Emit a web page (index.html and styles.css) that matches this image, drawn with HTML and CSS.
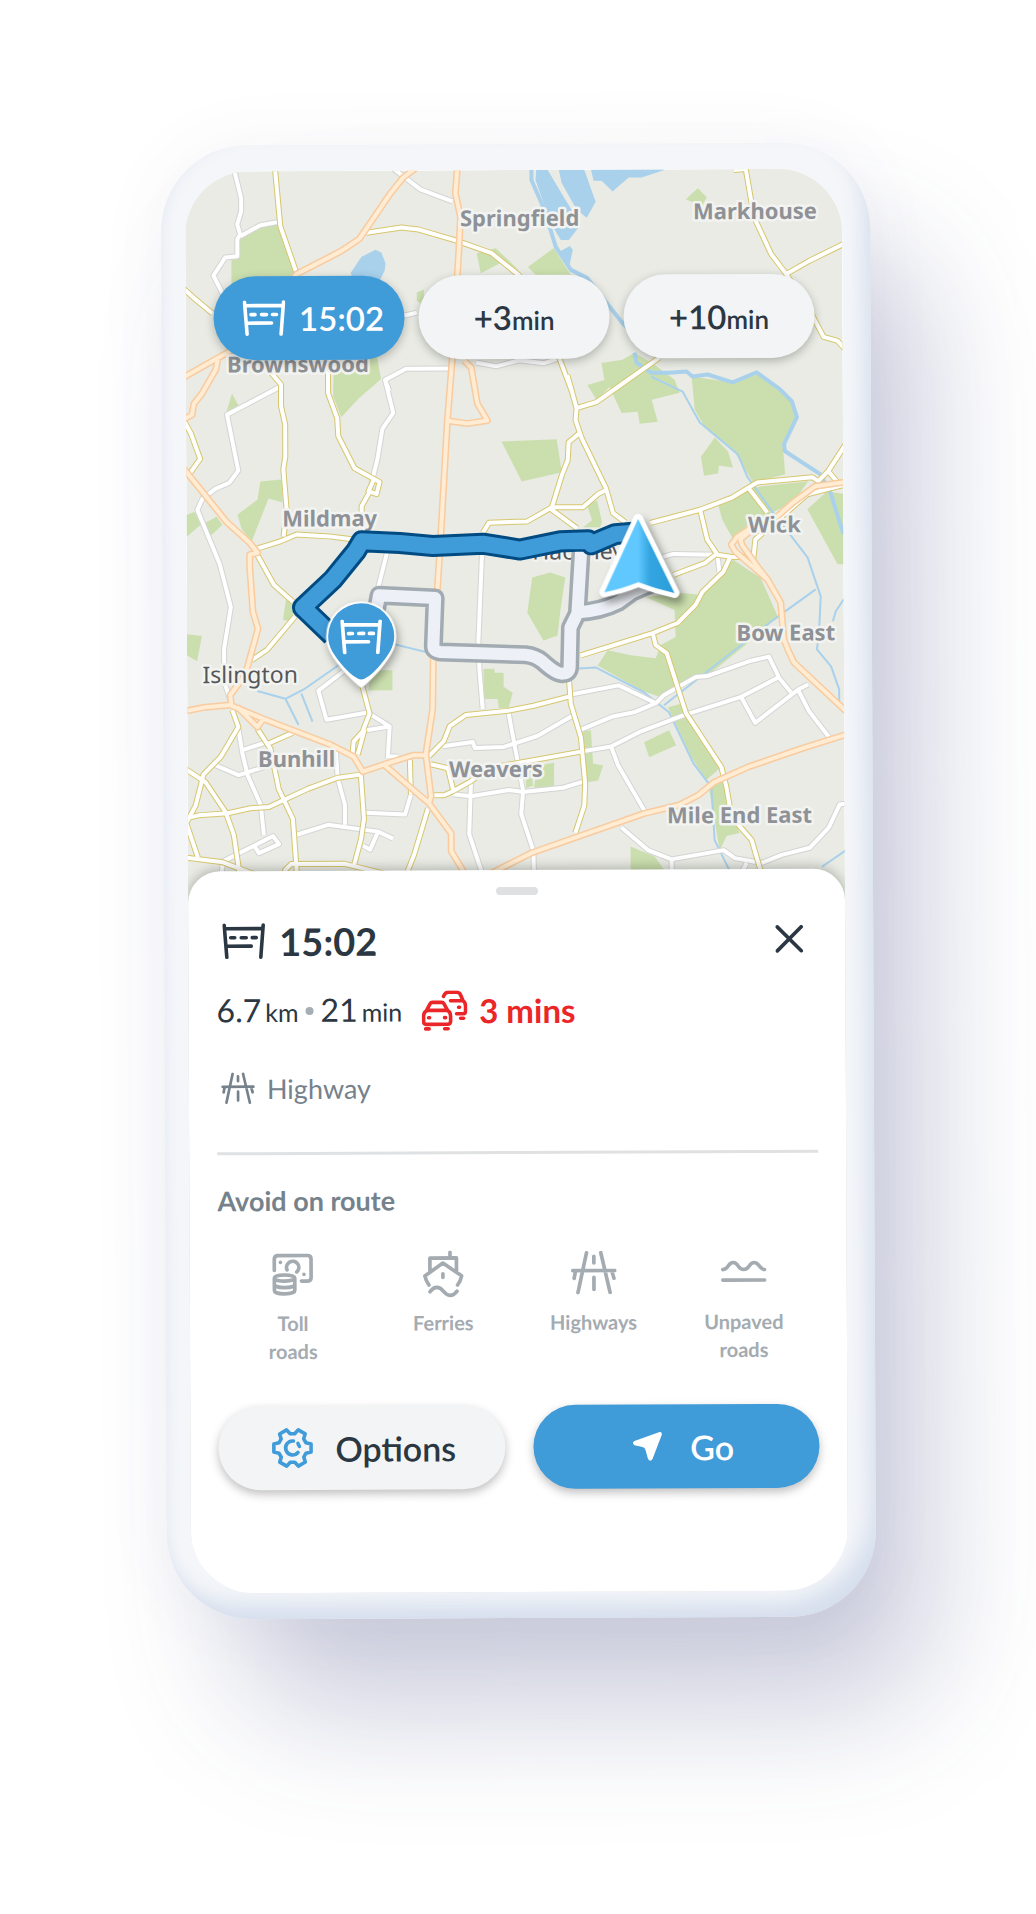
FILE: index.html
```html
<!DOCTYPE html>
<html lang="en">

<head>
    <meta charset="UTF-8">
    <meta name="viewport" content="width=device-width, initial-scale=1.0">
    <title>Route overview</title>
    <link rel="stylesheet" href="styles.css">
</head>

<body>
    <svg class="sprite" aria-hidden="true">
        <symbol id="icon-toll-gate" viewBox="0 0 43 36">
            <path d="M2 2L4.500 34M41 2L38.500 34M2.500 5.500H40.500M4 23H29M8.500 14.500H12.500M19 14.500H24M30 14.500H34" />
        </symbol>
        <symbol id="icon-road" viewBox="0 0 45 43">
            <path d="M15.500 2L7 41M29.500 2L38.500 41M2 19.500H43.500M22.700 5.500V12M22.700 26V38M4.500 21L3.300 27M40.500 21L42.300 27" />
        </symbol>
    </svg>

    <main class="phone">
        <div class="screen">
            <div class="map">
                <svg class="map-canvas" viewBox="187 170 656 730" role="img" aria-label="Map of Hackney and Islington">
                    <defs>
                        <g id="roads-minor">
                            <path d="M236 168L243 197V210L239 223L242 233L239 238V255L227 256L215 274L224 292M242 235L262 224L279 221" />
                            <path d="M395 168L422 189L454 201M405 315L418 312M390 390L386 379L407 368L450 368M477 362L497 366L520 360L545 363L560 358" />
                            <path d="M386 379L394 412L383 428L378 458L372 482M387 552L378 587M482 553L478 640L479 670L482 708" />
                            <path d="M280 386L228 413L239 469L230 481L216 487L203 497L198 508L220 562L231 605L224 647V680L231 700" />
                            <path d="M663 557L673 554L715 555M717 555L719 572" />
                            <path d="M580 751L610 746L640 731L683 715L740 697L777 678M610 746L617 765L643 810" />
                            <path d="M570 694L618 685L655 703L633 712L612 716L580 729M655 703L663 695L695 677L707 676L750 661L768 657L778 678L790 693" />
                            <path d="M740 697L754 723L797 690L807 685M797 690L808 712L828 738M508 713L522 790L520 813L532 850L533 900" />
                            <path d="M442 745L472 741L474 747L503 746L537 735L572 715M452 793L470 795L508 789L522 791L562 787L582 781M470 780L468 833L480 870" />
                            <path d="M850 803L838 805L827 828L808 848L780 855L760 863L733 858L722 850L670 859L647 850L620 827M670 859V900M745 863L730 890" />
                            <path d="M238 727L242 752L247 773L260 803L263 833M220 860L272 834L278 842L258 851L253 843M222 860L218 890M242 748L267 740" />
                            <path d="M215 763L238 773L270 763M335 747L337 777L344 803V823M295 833L327 823L377 830L392 837M377 830L369 848L362 844" />
                            <path d="M365 811L404 813L410 793M343 670L318 689L326 718L367 711L389 725L387 757M389 725L364 729M387 755H397" />
                        </g>
                        <g id="roads-yellow">
                            <path d="M277 168L282 225L298 272M184 286L195 296L214 312M368 232L403 227L420 229L457 240L493 253L520 275L555 330L560 358L572 390" />
                            <path d="M329 363V392L338 417L339 435L355 467L380 481L377 493L369 490L374 479M371 489L362 505V527" />
                            <path d="M265 363L282 383V405L286 423V455L284 468L287 507L284 535M184 417L192 432L201 457L191 471" />
                            <path d="M257 547L280 540L297 533L330 535L352 538M257 552L274 583L293 600M295 615L267 648L252 658" />
                            <path d="M483 532L489 522L527 521L552 507L562 475L568 460L569 442L580 433M552 507H583L598 494L606 490M550 508L577 528" />
                            <path d="M568 375L577 408L576 420L582 438L606 488L613 513L625 522M660 358L597 402L577 408" />
                            <path d="M650 523L700 510L732 498L757 483L812 478L818 482L828 472L845 446M828 472L838 484" />
                            <path d="M700 510L707 540L717 555L730 557L753 558L755 540L807 495L843 486M748 488L767 513" />
                            <path d="M673 575L705 563L715 555M730 557L723 572L702 592L695 605L677 623L652 633L580 655" />
                            <path d="M735 171L747 170L755 218L772 255L787 275L810 262L845 245M787 275L813 317L824 338L838 342L845 350" />
                            <path d="M568 675L570 703L580 737L584 783L583 805L574 832M568 696L533 705L507 710L465 714L449 725L443 740L428 755" />
                            <path d="M500 765L517 762L580 751M652 633L655 645L666 653L677 688L685 713L720 767L725 787L730 817L750 840L760 875" />
                            <path d="M232 708L238 725L220 755L203 772L195 803L186 820M184 766L205 780L225 810L233 833L239 875" />
                            <path d="M184 816L198 813L227 811L250 806L268 805L307 787L337 776L360 773L363 817L360 837L353 863" />
                            <path d="M257 727L270 747L278 787L292 817L296 875M267 742L292 731M184 855L222 860L253 872M186 822L197 855" />
                            <path d="M284 880V868L290 862L343 862L383 872M362 685L369 712L362 730L353 740L352 752M364 728L357 753" />
                            <path d="M427 807L413 853L405 873M409 758L410 793M430 763L447 767L452 788M432 794H443L452 790L470 780L490 765" />
                        </g>
                        <g id="roads-main">
                            <path d="M417 168L405 177L392 193L361 238L343 250L298 273L240 345L227 352L184 376M219 358L217 368L203 392L195 402L193 413L184 418" />
                            <path d="M459 168L457 193L462 217L460 253L453 360L448 420L441 533L433 652L432 708L425 753L430 795L428 802" />
                            <path d="M465 360L472 367L478 403L488 420L468 423L448 420" />
                            <path d="M184 466L227 520L250 541L258 551L250 553V565L253 610L258 627L245 673L230 693L231 703" />
                            <path d="M184 709L205 705L230 703L263 717L330 743L353 755L362 770L383 763L412 754L425 754M237 705L257 725L263 717M383 763L428 802L450 832V850L465 875" />
                            <path d="M845 483L815 487L793 503L777 517L753 527L737 537L731 545L735 552L767 580L780 603L783 640L787 650L793 663L845 712" />
                            <path d="M755 527L740 540L742 546L750 557L757 567L767 580" />
                            <path d="M845 735L800 749L747 767L713 782L697 795L677 805L643 813L530 852L490 872" />
                        </g>
                        <path id="route-alternative" d="M376 610L379 594L435 597L433 645Q433 650 440 651L525 654Q535 655 542 661Q556 674 562 673Q569 673 569 666L570 627L577 613L581 550M577 612Q600 611 618 602L632 592L660 580" />
                        <path id="route-selected" d="M642 532L615 534L591 544L588 540L560 541L520 549L483 543L433 545L400 542L362 540L356 550L333 578L303 606L332 634M578 541V549" />
                        <linearGradient id="arrow-fill" x1="0" y1="0" x2="1" y2="0">
                            <stop offset="0" stop-color="#60c8ff" />
                            <stop offset=".48" stop-color="#60c8ff" />
                            <stop offset=".65" stop-color="#34a5e0" />
                            <stop offset="1" stop-color="#2b9edb" />
                        </linearGradient>
                    </defs>

                    <rect class="land" x="187" y="170" width="656" height="730" />

                    <g class="park">
                        <path d="M242 237L260 227L279 223L297 273L300 290L233 300V258H240ZM335 360L378 356L382 378L360 397L342 416L334 395Z" />
                        <path d="M478 253L497 248L520 270L503 262L482 273ZM555 248L572 275H537L529 267ZM687 200L699 189L708 198L703 207ZM418 292L425 289V305L418 300Z" />
                        <path d="M692 377L733 383L757 375L780 390L793 402L797 418L783 448L785 475L753 483L733 450L705 428L695 410Z" />
                        <path d="M588 385L605 380L602 363L623 360L635 353L655 365L675 380L680 393L652 400L658 422L640 424L638 412L622 413L610 387L597 400Z" />
                        <path d="M502 441L557 439L562 472L522 481ZM715 438L728 452L733 468L719 466L718 474L704 476L701 457Z" />
                        <path d="M718 505L748 490L760 487L808 482L793 503L748 525L733 540L722 520ZM827 492L843 495V565H837L807 510Z" />
                        <path d="M733 560L750 572L760 578L777 617L745 645L705 677L685 683L660 697L640 690L597 665L607 650L630 655L655 658L660 645L675 637L674 610L645 597L682 593L700 595Z" />
                        <path d="M532 577L550 572L565 577L560 610L557 635L543 640L527 612ZM587 505L597 500L602 522L600 527H583L592 520Z" />
                        <path d="M233 392L240 405L227 412ZM238 513L258 498L261 480L282 478L283 501L269 497L252 540L242 527ZM187 513L195 510L202 522L187 535ZM202 523L217 515L223 523L212 533Z" />
                        <path d="M187 632L202 634L197 659L187 653ZM286 598L294 603L292 620L283 618ZM370 669H392V689H368Z" />
                        <path d="M483 668H494V672H503V686L512 692L508 707H498L497 698H483ZM643 742L668 730L675 745L648 757ZM667 707L683 703L720 767L705 780L690 757Z" />
                        <path d="M707 785L725 780L732 820L738 833L725 836L718 850ZM629 846L653 856L663 870V880H629ZM582 730H590L592 763L602 765L597 780L583 782ZM536 765L553 762V787L533 787ZM525 770H530L532 785L525 787Z" />
                    </g>

                    <g class="water">
                        <path d="M352 272L363 256L377 249L383 252L387 263L386 270L380 282H356Z" />
                        <path d="M538 168H548L565 197L582 225L570 240H562L552 223L537 180ZM560 168H585L597 202L588 218L578 210L563 183ZM592 168H665V171L643 178H630L614 192L603 181H595ZM560 252L571 246L574 250L570 268Z" />
                    </g>
                    <g class="river">
                        <path d="M533 170V180L545 208L557 247L572 270L588 278L623 323L640 340M635 353L637 363L652 373H670L687 372L693 377L708 375L733 383L757 373L780 390L792 402L797 418L784 445L785 452L820 475L830 493L843 535" />
                    </g>
                    <g class="river river-thin">
                        <path d="M652 377L683 392L700 423L738 455L747 477L772 512L807 558L820 597L818 635L816 650L830 667L838 690V705M815 590L773 620L663 705" />
                        <path d="M578 668L595 667L643 692L668 712L692 763L710 787L713 840L730 875M820 867L845 850M843 600L835 612L832 622" />
                        <path d="M345 659L303 688L285 697L257 689M285 697L298 723M301 692L312 720M390 642L430 652" />
                    </g>

                    <use class="road minor-casing" href="#roads-minor" />
                    <use class="road minor" href="#roads-minor" />
                    <use class="road yellow-casing" href="#roads-yellow" />
                    <use class="road yellow" href="#roads-yellow" />
                    <use class="road main-casing" href="#roads-main" />
                    <use class="road main" href="#roads-main" />

                    <g class="place">
                        <text x="521" y="226">Springfield</text>
                        <text x="756" y="220">Markhouse</text>
                        <text x="299" y="371">Brownswood</text>
                        <text x="330" y="525">Mildmay</text>
                        <text x="774" y="533">Wick</text>
                        <text x="785" y="641">Bow East</text>
                        <text x="296" y="765">Bunhill</text>
                        <text x="495" y="776">Weavers</text>
                        <text x="738" y="823">Mile End East</text>
                    </g>
                    <g class="place district">
                        <text x="250" y="681">Islington</text>
                        <text x="578" y="559">Hackney</text>
                    </g>

                    <use class="road alternative-casing" href="#route-alternative" />
                    <use class="road alternative" href="#route-alternative" />
                    <use class="road selected-casing" href="#route-selected" />
                    <use class="road selected" href="#route-selected" />

                    <path class="pin-back" d="M361 685Q356 682 344 669C333 656 327 647 327 635A34 34 0 0 1 395 635C395 647 389 656 378 669Q366 682 361 685Z" />
                    <path class="pin-front" d="M361 678Q355 678 344 666C334 654 328 646 328 635A33 33 0 0 1 394 635C394 646 388 654 378 666Q367 678 361 678Z" />
                    <use class="pin-icon" href="#icon-toll-gate" x="340" y="618" width="42" height="35" />

                    <path class="arrow" d="M638 519L604 592Q620 589 638 582Q656 589 674 593Z" />
                </svg>

                <div class="routes">
                    <button class="route active" type="button">
                        <svg class="icon gate"><use href="#icon-toll-gate" /></svg>
                        <span>15:02</span>
                    </button>
                    <button class="route" type="button"><span>+3<small>min</small></span></button>
                    <button class="route" type="button"><span>+10<small>min</small></span></button>
                </div>
            </div>

            <section class="sheet">
                <div class="handle"></div>

                <header class="sheet-header">
                    <svg class="icon gate"><use href="#icon-toll-gate" /></svg>
                    <h1>15:02</h1>
                    <button class="close" type="button" aria-label="Close">
                        <svg class="icon" viewBox="0 0 28 28"><path d="M2 2L26 26M26 2L2 26" /></svg>
                    </button>
                </header>

                <div class="summary">
                    <span>6.7<small>km</small></span>
                    <span class="dot"></span>
                    <span>21<small>min</small></span>
                    <span class="delay">
                        <svg class="icon cars" viewBox="0 0 46 41">
                            <path d="M5 20L8.500 13.500Q9.300 12 11 12H20Q21.700 12 22.500 13.500L26 20M6 20H25Q29 21 29 26V31Q29 34 26 34H5Q2 34 2 31V26Q2 21 6 20ZM4 38.500H7.500M23 38.500H26.500M7 27.300H8M23 27.300H24" />
                            <path d="M22 6Q23.500 2 27 2H35Q38 2 39 4.500L41.500 10.500Q44 12 44 16V21Q44 23.500 41.500 23.500H35M29 10.500H41M37 17H38M39 28H42" />
                        </svg>
                        <strong>3 mins</strong>
                    </span>
                </div>

                <div class="road-type">
                    <svg class="icon road-icon"><use href="#icon-road" /></svg>
                    <span>Highway</span>
                </div>

                <hr>

                <h2>Avoid on route</h2>
                <div class="avoid">
                    <button type="button">
                        <svg class="icon" viewBox="-3 -3 45 47">
                            <path d="M1.500 16V5Q1.500 1.500 5 1.500H34Q37.500 1.500 37.500 5V23Q37.500 26.500 34 26.500H28M14 15.500A6 6 0 1 1 23.500 17.500M7.500 8V8.100M30.500 20V20.100" />
                            <path d="M1.500 23.500C1.500 19.500 21.500 19.500 21.500 23.500S1.500 27.500 1.500 23.500V35.500C1.500 40 21.500 40 21.500 35.500V23.500M1.500 29.500C1.500 34 21.500 34 21.500 29.500" />
                        </svg>
                        <span>Toll<br>roads</span>
                    </button>
                    <button type="button">
                        <svg class="icon" viewBox="-3 0 45 47">
                            <path d="M7 21V7.500H33V21M26.700 2V7M6 34Q3 30 2 25L19.700 12.500L38 25Q37 30 34 34M19.700 23V26.500M7 40.500C11 35 16 35 20 40S29 46 33.500 40" />
                        </svg>
                        <span>Ferries</span>
                    </button>
                    <button type="button">
                        <svg class="icon" viewBox="0 -1 45 47"><use href="#icon-road" width="45" height="43" /></svg>
                        <span>Highways</span>
                    </button>
                    <button type="button">
                        <svg class="icon" viewBox="0 -11 46 47">
                            <path d="M2 9C8 9 7 2 12.500 2S17 9 23 9S28 2 33.500 2S38 9 44 9M2 19.500H44" />
                        </svg>
                        <span>Unpaved<br>roads</span>
                    </button>
                </div>

                <div class="actions">
                    <button class="action" type="button">
                        <svg class="icon gear" viewBox="-21 -21 42 42">
                            <path d="M13.500-5.200L18.600-4V4L13.500 5.200L11.250 9.100L12.800 14.100L5.800 18.100L2.250 14.300H-2.250L-5.800 18.100L-12.800 14.100L-11.250 9.100L-13.500 5.200L-18.600 4V-4L-13.500-5.200L-11.250-9.100L-12.800-14.100L-5.800-18.100L-2.250-14.300H2.250L5.800-18.100L12.800-14.100L11.250-9.100Z" />
                            <path d="M1-7A7 7 0 1 0 5.500 4.500M5.500-4.500L7-1.500" />
                        </svg>
                        <span>Options</span>
                    </button>
                    <button class="action go" type="button">
                        <svg class="send" viewBox="0 0 30 30">
                            <path d="M26.500.8L2 9.500Q-1 11.500 2 13.800L10 15.500Q12.500 16 13 18.500L15.500 27.500Q17.500 31 20 27.500L29.300 3.500Q30-.3 26.500.8Z" />
                        </svg>
                        <span>Go</span>
                    </button>
                </div>
            </section>
        </div>
    </main>
</body>

</html>
```
FILE: styles.css
```css
* {
    box-sizing: border-box;
    font-family: Lato, 'Open Sans', sans-serif;
}

body {
    margin: 0;
    padding: 144px 24px 296px;
    min-height: 100vh;
    display: flex;
    justify-content: center;
    align-items: flex-start;
    background-color: #fff;
    color: #2b3742;
}

button {
    margin: 0;
    padding: 0;
    border: none;
    background: none;
    color: inherit;
    cursor: pointer;
}

.sprite {
    display: none;
}

.icon {
    display: block;
    flex: none;
    fill: none;
    stroke: currentColor;
    stroke-width: 3.6;
    stroke-linecap: round;
    stroke-linejoin: round;
}

.gate {
    width: 43px;
    height: 36px;
}

/* phone frame */
.phone {
    width: 100%;
    max-width: 709px;
    padding: 26px 28px 26px 24px;
    border-radius: 86px;
    background-color: #f4f6f9;
    box-shadow:
        inset -14px -22px 22px -8px #d5deed,
        inset 8px 0 12px -6px #e6ebf5,
        0 0 70px rgba(80, 80, 130, 0.06),
        62px 100px 130px -10px rgba(66, 72, 130, 0.28);
    transform: rotate(-0.25deg);
}

.screen {
    overflow: hidden;
    border-radius: 64px;
    background-color: #fff;
}

/* map */
.map {
    position: relative;
}

.map-canvas {
    display: block;
    width: 100%;
    height: auto;
}

.land {
    fill: #e9ebe4;
}

.park {
    fill: #cbdfae;
}

.water {
    fill: #a9d1ec;
}

.river {
    fill: none;
    stroke: #a9d1ec;
    stroke-width: 4;
    stroke-linejoin: round;
}

.river-thin {
    stroke-width: 2;
}

.road {
    fill: none;
    stroke-linejoin: round;
}

.minor-casing {
    stroke: #d3d4d4;
    stroke-width: 6;
}

.minor {
    stroke: #fff;
    stroke-width: 4;
}

.yellow-casing {
    stroke: #d6c76e;
    stroke-width: 6;
}

.yellow {
    stroke: #fff;
    stroke-width: 4;
}

.main-casing {
    stroke: #f8cba0;
    stroke-width: 7;
}

.main {
    stroke: #ffecd2;
    stroke-width: 4;
}

.alternative-casing {
    stroke: #a3abb2;
    stroke-width: 19;
}

.alternative {
    stroke: #edf0f6;
    stroke-width: 12;
}

.selected-casing {
    stroke: #004b82;
    stroke-width: 22;
}

.selected {
    stroke: #409bd9;
    stroke-width: 16;
}

.place {
    fill: #8e9297;
    stroke: #f3f4f1;
    stroke-width: 5px;
    stroke-linejoin: round;
    paint-order: stroke;
    text-anchor: middle;
}

.place text {
    font-family: 'Noto Sans', sans-serif;
    font-size: 22px;
    font-weight: 700;
}

.district {
    fill: #55575a;
}

.district text {
    font-size: 23px;
    font-weight: 400;
}

.pin-back {
    fill: #fff;
    stroke: #fff;
    stroke-width: 2;
    filter: drop-shadow(2px 4px 4px rgba(0, 0, 0, 0.35));
}

.pin-front {
    fill: #409bd9;
}

.pin-icon {
    fill: none;
    stroke: #fff;
    stroke-width: 3.8;
    stroke-linecap: round;
}

.arrow {
    fill: url(#arrow-fill);
    stroke: #fff;
    stroke-width: 10;
    stroke-linejoin: round;
    paint-order: stroke;
    filter: drop-shadow(4px 6px 4px rgba(0, 0, 0, 0.4));
}

.routes {
    position: absolute;
    top: 105px;
    left: 28px;
    right: 28px;
    display: grid;
    grid-template-columns: repeat(3, 1fr);
    gap: 14px;
}

.route {
    height: 84px;
    display: flex;
    justify-content: center;
    align-items: center;
    gap: 14px;
    border-radius: 42px;
    background-color: #f2f4f6;
    box-shadow: 0 3px 10px rgba(0, 0, 0, 0.25);
    font-size: 33px;
    font-weight: 600;
}

.route small {
    font-size: 26px;
}

.route.active {
    padding-left: 8px;
    background-color: #409bd9;
    color: #fff;
}

/* bottom sheet */
.sheet {
    position: relative;
    margin-top: -31px;
    padding: 17px 28px 103px;
    border-radius: 32px 32px 0 0;
    background-color: #fff;
    box-shadow: 0 -2px 12px rgba(0, 0, 0, 0.25);
}

.handle {
    width: 42px;
    height: 8px;
    margin: 0 auto;
    border-radius: 4px;
    background-color: #dfe0e2;
}

.sheet-header {
    display: flex;
    align-items: center;
    gap: 14px;
    height: 44px;
    margin-top: 23px;
    padding: 0 14px 0 6px;
}

h1 {
    margin: 0;
    font-size: 38px;
    font-weight: 700;
    line-height: 44px;
}

.close {
    margin-left: auto;
}

.close .icon {
    width: 28px;
    height: 28px;
}

.summary {
    display: flex;
    align-items: center;
    gap: 7px;
    height: 44px;
    margin-top: 26px;
    font-size: 32px;
    line-height: 44px;
}

.summary small {
    margin-left: 4px;
    font-size: 25px;
}

.dot {
    width: 8px;
    height: 8px;
    border-radius: 50%;
    background-color: #a5adb5;
}

.delay {
    display: flex;
    align-items: center;
    gap: 12px;
    margin-left: 12px;
    color: #eb2628;
}

.delay strong {
    font-size: 33px;
    font-weight: 700;
}

.cars {
    width: 46px;
    height: 41px;
}

.road-type {
    display: flex;
    align-items: center;
    gap: 12px;
    height: 34px;
    margin-top: 38px;
    padding-left: 4px;
    color: #75828c;
    font-size: 27px;
}

.road-icon {
    width: 34px;
    height: 32px;
}

hr {
    height: 3px;
    margin: 47px 0 0;
    border: none;
    background-color: #dfe1e3;
}

h2 {
    margin: 30px 0 0;
    color: #75828c;
    font-size: 27px;
    font-weight: 700;
    line-height: 32px;
}

.avoid {
    display: grid;
    grid-template-columns: repeat(4, 1fr);
    margin-top: 34px;
}

.avoid button {
    display: flex;
    flex-direction: column;
    align-items: center;
    gap: 10px;
    color: #a4abb1;
    font-size: 20px;
    font-weight: 700;
    line-height: 28px;
}

.avoid .icon {
    width: 46px;
    height: 48px;
}

.actions {
    display: grid;
    grid-template-columns: 1fr 1fr;
    gap: 28px;
    margin-top: 41px;
}

.action {
    height: 84px;
    display: flex;
    justify-content: center;
    align-items: center;
    gap: 22px;
    padding-left: 4px;
    border-radius: 42px;
    background-color: #f2f4f6;
    box-shadow: 0 4px 10px rgba(0, 0, 0, 0.25);
    font-size: 34px;
    font-weight: 600;
}

.gear {
    width: 42px;
    height: 42px;
    color: #409bd9;
}

.go {
    gap: 28px;
    padding-left: 14px;
    background-color: #409bd9;
    color: #fff;
}

.send {
    width: 30px;
    height: 30px;
    fill: currentColor;
}
```
